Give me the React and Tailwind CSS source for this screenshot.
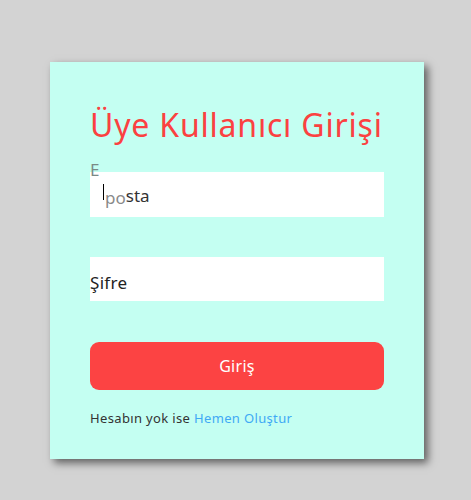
import React from 'react';

export default function App() {
  return (
    <div className="min-h-[500px] w-full bg-[#d3d3d3] pt-[62px]" style={{ fontFamily: '"Noto Sans", "Open Sans", sans-serif' }}>
      <div className="ml-[50px] w-[374px] h-[397px] bg-[#c4fff2] shadow-[4px_4px_8px_rgba(0,0,0,0.55)] px-10 pt-[41px]">
        {/* Title */}
        <h1 className="text-[32px] leading-[44px] text-[#fb4141] tracking-[0.8px] whitespace-nowrap">Üye Kullanıcı Girişi</h1>

        {/* E-posta */}
        <div className="relative mt-[15px] h-[55px]">
          <div className="absolute left-0 top-[10px] w-[294px] h-[45px] bg-white flex items-center pl-[13px]">
            <span className="w-px h-[16px] bg-black mt-[-6px]"></span>
            <span className="text-[17px] text-[#8a8a8a] ml-[1px] mt-[7px]">po</span>
            <span className="text-[17px] text-[#333] mt-[3px]">sta</span>
          </div>
          <span className="absolute z-10 left-0 top-[-2px] text-[17px] leading-[19px] text-[#7a8a86]">E</span>
        </div>

        {/* Şifre */}
        <div className="mt-[40px] w-[294px] h-[44px] bg-white flex items-center pt-[8px]">
          <span className="text-[17px] text-[#222] tracking-[0.3px]">Şifre</span>
        </div>

        <button className="mt-[41px] w-[294px] h-[48px] rounded-[9px] bg-[#fc4343] text-white text-[16px] tracking-[0.3px]">Giriş</button>

        <p className="mt-[19px] text-[13px] text-[#333] tracking-[0.35px]">
          Hesabın yok ise <span className="text-[#3fa9f5]">Hemen Oluştur</span>
        </p>
      </div>
    </div>
  );
}
